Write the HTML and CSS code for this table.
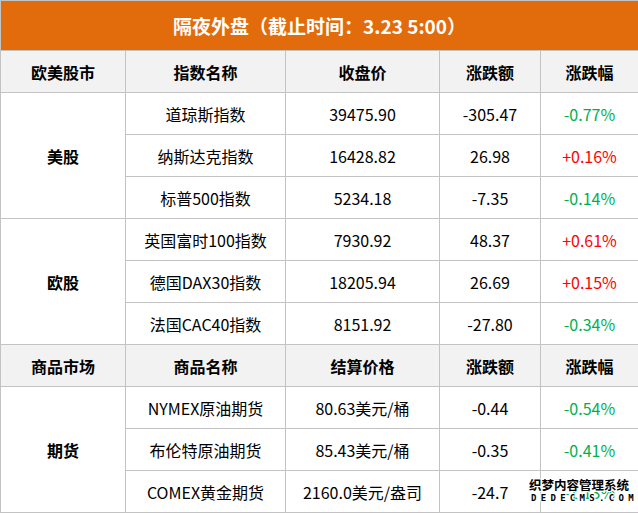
FILE: index.html
```html
<!DOCTYPE html>
<html lang="zh-CN">
<head>
<meta charset="utf-8">
<title>隔夜外盘</title>
<link rel="stylesheet" href="styles.css">
</head>
<body>
<div class="wrap">
<table class="market">
  <colgroup>
    <col class="c1"><col class="c2"><col class="c3"><col class="c4"><col class="c5">
  </colgroup>
  <tr class="title-row"><td colspan="5">隔夜外盘（截止时间：3.23 5:00）</td></tr>
  <tr class="head">
    <td>欧美股市</td><td>指数名称</td><td>收盘价</td><td>涨跌额</td><td>涨跌幅</td>
  </tr>
  <tr>
    <td class="group" rowspan="3">美股</td>
    <td>道琼斯指数</td><td>39475.90</td><td>-305.47</td><td class="down">-0.77%</td>
  </tr>
  <tr><td>纳斯达克指数</td><td>16428.82</td><td>26.98</td><td class="up">+0.16%</td></tr>
  <tr><td>标普500指数</td><td>5234.18</td><td>-7.35</td><td class="down">-0.14%</td></tr>
  <tr>
    <td class="group" rowspan="3">欧股</td>
    <td>英国富时100指数</td><td>7930.92</td><td>48.37</td><td class="up">+0.61%</td>
  </tr>
  <tr><td>德国DAX30指数</td><td>18205.94</td><td>26.69</td><td class="up">+0.15%</td></tr>
  <tr><td>法国CAC40指数</td><td>8151.92</td><td>-27.80</td><td class="down">-0.34%</td></tr>
  <tr class="head">
    <td>商品市场</td><td>商品名称</td><td>结算价格</td><td>涨跌额</td><td>涨跌幅</td>
  </tr>
  <tr>
    <td class="group" rowspan="3">期货</td>
    <td>NYMEX原油期货</td><td>80.63美元/桶</td><td>-0.44</td><td class="down">-0.54%</td>
  </tr>
  <tr><td>布伦特原油期货</td><td>85.43美元/桶</td><td>-0.35</td><td class="down">-0.41%</td></tr>
  <tr><td>COMEX黄金期货</td><td>2160.0美元/盎司</td><td>-24.7</td><td class="down">-1.13%</td></tr>
</table>
<div class="watermark">
  <div class="wm-cn">织梦内容管理系统</div>
  <div class="wm-en">DEDECMS.COM</div>
</div>
</div>
</body>
</html>
```
FILE: styles.css
```css
html, body {
  margin: 0;
  padding: 0;
  background: #ffffff;
}
.wrap {
  position: relative;
  width: 638px;
}
.market {
  width: 638px;
  border-collapse: collapse;
  table-layout: fixed;
  font-family: "Noto Sans CJK SC", "Microsoft YaHei", sans-serif;
  font-size: 16px;
  color: #000000;
}
.c1 { width: 125px; }
.c2 { width: 160px; }
.c3 { width: 154px; }
.c4 { width: 101px; }
.c5 { width: 98px; }
.market td {
  border: 1px solid #c3c3c3;
  text-align: center;
  vertical-align: middle;
  padding: 0;
  height: 41px;
  line-height: 20px;
  white-space: nowrap;
}
.title-row td {
  height: 49px;
  background: #e26b0b;
  color: #ffffff;
  font-size: 19px;
  font-weight: bold;
}
.head td {
  background: #f2f2f2;
  font-weight: bold;
}
.market td.group {
  font-weight: bold;
}
.market td.up { color: #ff0000; }
.market td.down { color: #00b050; }
.watermark {
  position: absolute;
  left: 527px;
  top: 476px;
  width: 104px;
  text-align: center;
  font-family: "Noto Sans CJK SC", sans-serif;
  font-weight: bold;
  color: #000000;
  text-shadow: 1px 0 #fff, -1px 0 #fff, 0 1px #fff, 0 -1px #fff, 1px 1px #fff, -1px -1px #fff, 1px -1px #fff, -1px 1px #fff;
}
.wm-cn {
  font-size: 12.5px;
  line-height: 17px;
}
.wm-en {
  font-family: "DejaVu Sans Mono", monospace;
  font-size: 9px;
  line-height: 9px;
  margin-top: 1px;
  padding-left: 4px;
  letter-spacing: 4.3px;
}
```
